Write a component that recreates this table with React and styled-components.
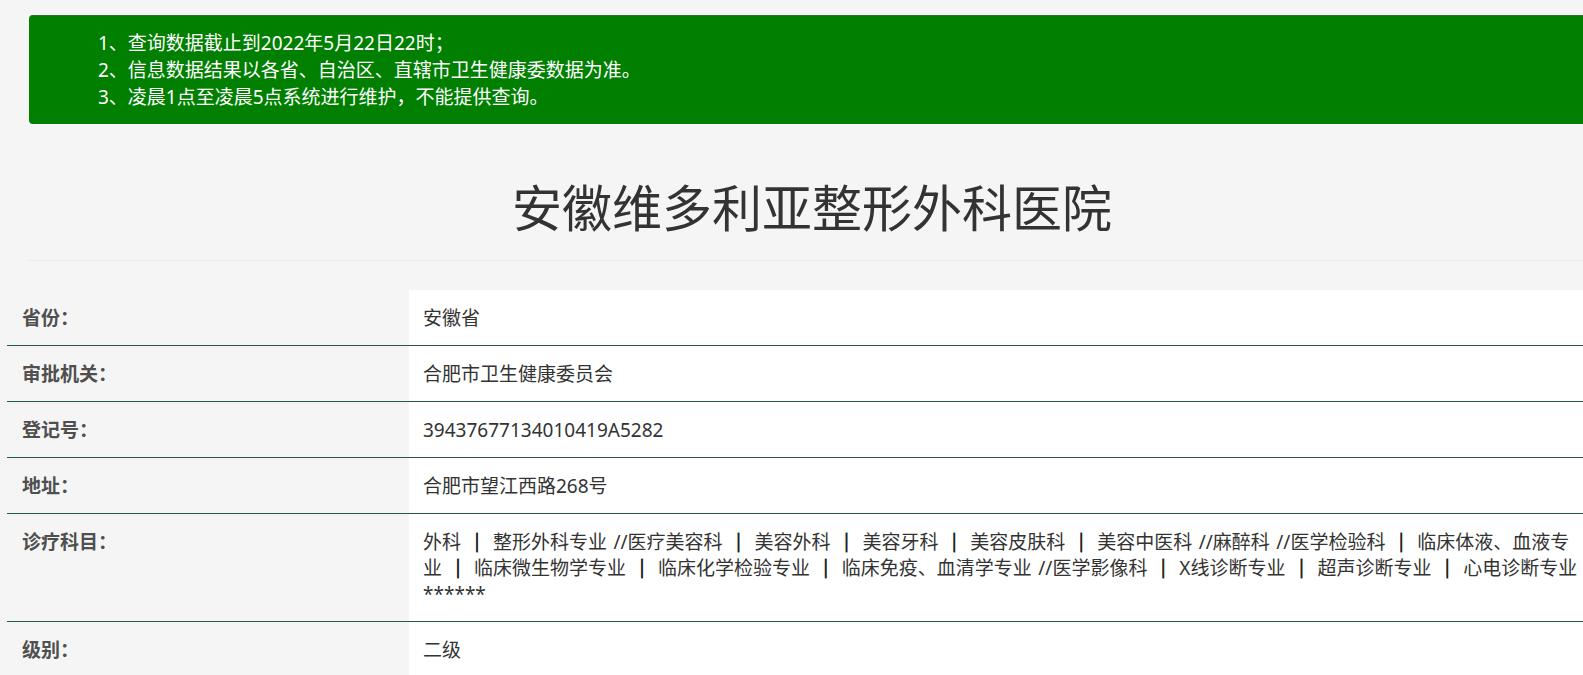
import React from "react";
import styled, { createGlobalStyle } from "styled-components";

const Global = createGlobalStyle`
  html, body {
    margin: 0;
    padding: 0;
    background: #f5f5f5;
    overflow: hidden;
  }
  body {
    font-family: "Noto Sans", "Noto Sans CJK SC", sans-serif;
    color: #333;
  }
`;

const Page = styled.div`
  width: 100vw;
  overflow: hidden;
`;

const Container = styled.div`
  width: 1600px;
  padding-top: 15px;
`;

const Alert = styled.div`
  margin-left: 29px;
  width: 1566px;
  box-sizing: border-box;
  background: #007f00;
  border-top: 1px solid #2a6f2a;
  border-radius: 4px;
  color: #fff;
  padding: 14px 0 13px 69px;
  font-size: 19px;
  line-height: 27px;
`;

const AlertLine = styled.div`
  white-space: nowrap;
`;

const Title = styled.h1`
  margin: 57px 0 0 29px;
  width: 1566px;
  text-align: center;
  font-size: 50px;
  font-weight: 400;
  line-height: 55px;
  color: #333;
`;

const Rule = styled.div`
  margin: 24px 0 0 29px;
  width: 1566px;
  height: 1px;
  background: #e9e9e9;
`;

const Table = styled.div`
  margin: 29px 0 0 7px;
  width: 1590px;
`;

const Row = styled.div`
  display: grid;
  grid-template-columns: 402px 1fr;
  border-bottom: 1px solid #245a46;
`;

const Label = styled.div`
  padding: 15px 15px 14px 15px;
  font-size: 19px;
  line-height: 26px;
  font-weight: 700;
  color: #4f4f4f;
  background: #f5f5f5;
`;

const Value = styled.div`
  padding: 15px 14px 14px 14px;
  font-size: 19px;
  line-height: 26px;
  word-spacing: 1.5px;
  color: #333;
  background: #fff;
`;

const Content = styled.div`
  width: 1160px;
`;

const Sep = styled.span`
  display: inline-block;
  line-height: 26px;
  height: 26px;
  vertical-align: top;
  font-family: "Noto Sans CJK SC", sans-serif;
  font-weight: 700;
  color: #222;
  -webkit-text-stroke: 0.9px #222;
`;

const departments = [
  "外科",
  "整形外科专业 //医疗美容科",
  "美容外科",
  "美容牙科",
  "美容皮肤科",
  "美容中医科 //麻醉科 //医学检验科",
  "临床体液、血液专业",
  "临床微生物学专业",
  "临床化学检验专业",
  "临床免疫、血清学专业 //医学影像科",
  "X线诊断专业",
  "超声诊断专业",
  "心电诊断专业",
];

const Departments = () => (
  <>
    {departments.map((d, i) => (
      <React.Fragment key={d}>
        {i > 0 && (
          <>
            {" "}
            <Sep>｜</Sep>{" "}
          </>
        )}
        {d}
      </React.Fragment>
    ))}{" "}
    ******
  </>
);

const rows = [
  ["省份：", "安徽省"],
  ["审批机关：", "合肥市卫生健康委员会"],
  ["登记号：", "39437677134010419A5282"],
  ["地址：", "合肥市望江西路268号"],
  ["诊疗科目：", <Departments />],
  ["级别：", "二级"],
];

export default function App() {
  return (
    <Page>
      <Global />
      <Container>
        <Alert>
          <AlertLine>1、查询数据截止到2022年5月22日22时；</AlertLine>
          <AlertLine>2、信息数据结果以各省、自治区、直辖市卫生健康委数据为准。</AlertLine>
          <AlertLine>3、凌晨1点至凌晨5点系统进行维护，不能提供查询。</AlertLine>
        </Alert>
        <Title>安徽维多利亚整形外科医院</Title>
        <Rule />
        <Table>
          {rows.map(([k, v]) => (
            <Row key={k}>
              <Label>{k}</Label>
              <Value>
                <Content>{v}</Content>
              </Value>
            </Row>
          ))}
        </Table>
      </Container>
    </Page>
  );
}
